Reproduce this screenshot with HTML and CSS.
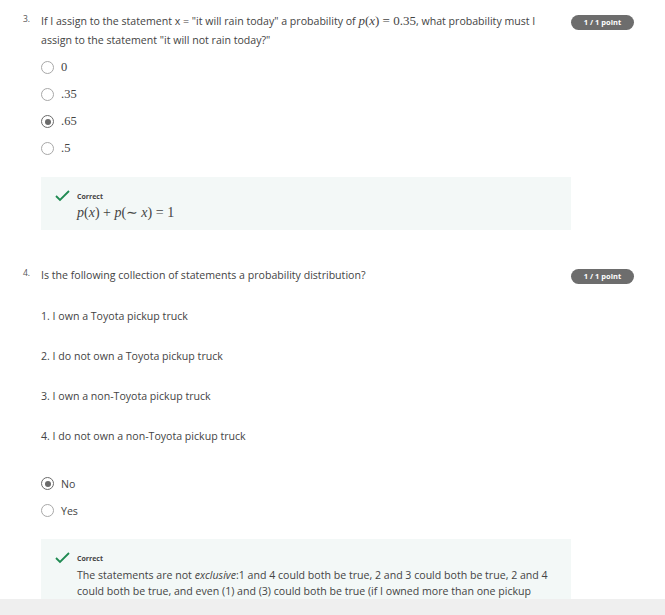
FILE: index.html
```html
<!DOCTYPE html>
<html>
<head>
<meta charset="utf-8">
<link rel="stylesheet" href="styles.css">
</head>
<body>
<div class="page">
  <section class="question q3">
    <div class="qnum">3.</div>
    <div class="qbody">
      <div class="qhead">
        <p class="qtext">If I assign to the statement x = "it will rain today" a probability of <span class="math"><i>p</i>(<i>x</i>) = 0.35</span>, what probability must I assign to the statement "it will not rain today?"</p>
        <span class="badge">1 / 1 point</span>
      </div>
      <ul class="options serif-opts">
        <li class="opt"><span class="radio"></span><span class="label">0</span></li>
        <li class="opt"><span class="radio"></span><span class="label">.35</span></li>
        <li class="opt"><span class="radio checked"></span><span class="label">.65</span></li>
        <li class="opt"><span class="radio"></span><span class="label">.5</span></li>
      </ul>
      <div class="feedback fb1">
        <svg class="check" width="15" height="12" viewBox="0 0 15 12"><polyline points="1,6 5,10 14,1" fill="none" stroke="#1f8a52" stroke-width="1.8"/></svg>
        <div class="fbcontent">
          <div class="fbtitle">Correct</div>
          <div class="formula"><i>p</i>(<i>x</i>) + <i>p</i>(∼ <i>x</i>) = 1</div>
        </div>
      </div>
    </div>
  </section>

  <section class="question q4">
    <div class="qnum">4.</div>
    <div class="qbody">
      <div class="qhead">
        <p class="qtext">Is the following collection of statements a probability distribution?</p>
        <span class="badge">1 / 1 point</span>
      </div>
      <ol class="statements">
        <li>1. I own a Toyota pickup truck</li>
        <li>2. I do not own a Toyota pickup truck</li>
        <li>3. I own a non-Toyota pickup truck</li>
        <li>4. I do not own a non-Toyota pickup truck</li>
      </ol>
      <ul class="options sans-opts">
        <li class="opt"><span class="radio checked"></span><span class="label">No</span></li>
        <li class="opt"><span class="radio"></span><span class="label">Yes</span></li>
      </ul>
      <div class="feedback fb2">
        <svg class="check" width="15" height="12" viewBox="0 0 15 12"><polyline points="1,6 5,10 14,1" fill="none" stroke="#1f8a52" stroke-width="1.8"/></svg>
        <div class="fbcontent">
          <div class="fbtitle">Correct</div>
          <p class="fbtext">The statements are not <em>exclusive</em>:1 and 4 could both be true, 2 and 3 could both be true, 2 and 4 could both be true, and even (1) and (3) could both be true (if I owned more than one pickup truck).</p>
        </div>
      </div>
    </div>
  </section>
</div>
<div class="bottombar"></div>
</body>
</html>
```

FILE: styles.css
```css
html, body {
  margin: 0;
  padding: 0;
  background: #ffffff;
  overflow: hidden;
}
body {
  font-family: "Open Sans", "DejaVu Sans", sans-serif;
  color: #373a3c;
  width: 665px;
  height: 615px;
}
.page {
  padding: 13px 31px 0 23px;
}
.question {
  display: flex;
}
.qnum {
  width: 18px;
  flex: none;
  font-size: 8.5px;
  line-height: 12px;
  color: #555;
}
.qbody {
  flex: 1;
}
.qhead {
  display: flex;
  align-items: flex-start;
  justify-content: space-between;
}
.qtext {
  margin: 0;
  font-size: 10.6px;
  line-height: 19px;
  width: 510px;
  margin-top: -1px;
  color: #444;
}
.math {
  font-family: "Liberation Serif", "DejaVu Serif", serif;
  font-size: 13px;
  line-height: 12px;
}
.badge {
  flex: none;
  width: 63px;
  height: 15px;
  border-radius: 8px;
  background: #6d6d6d;
  color: #fff;
  font-size: 7.5px;
  font-weight: 700;
  line-height: 15px;
  text-align: center;
  margin-top: 2px;
}
.options {
  list-style: none;
  margin: 4px 0 0 0;
  padding: 0;
}
.opt {
  display: flex;
  align-items: center;
  height: 27px;
}
.radio {
  width: 11px;
  height: 11px;
  border: 1px solid #a8a8a8;
  border-radius: 50%;
  box-sizing: content-box;
  display: flex;
  align-items: center;
  justify-content: center;
  flex: none;
}
.radio.checked {
  border-color: #6a6a6a;
}
.radio.checked::after {
  content: "";
  width: 6px;
  height: 6px;
  border-radius: 50%;
  background: #6a6a6a;
}
.label {
  margin-left: 7px;
}
.serif-opts .label {
  font-family: "Liberation Serif", "DejaVu Serif", serif;
  font-size: 12.5px;
  color: #444;
}
.sans-opts .label {
  font-size: 10.6px;
  color: #444;
}
.feedback {
  background: #f3f8f7;
  display: flex;
  align-items: flex-start;
  padding: 12px 0 0 14px;
  width: 516px;
  box-sizing: content-box;
}
.fb1 {
  margin-top: 15px;
  height: 41px;
}
.check {
  flex: none;
  margin-top: 1px;
}
.fbcontent {
  margin-left: 7px;
}
.fbtitle {
  font-size: 7px;
  font-weight: 700;
  color: #444;
  line-height: 10px;
  margin-top: 3px;
}
.formula {
  font-family: "Liberation Serif", "DejaVu Serif", serif;
  font-size: 14px;
  color: #444;
  line-height: 16px;
  margin-top: 3px;
}
.q4 {
  margin-top: 37px;
}
.statements {
  list-style: none;
  margin: 21px 0 0 0;
  padding: 0;
}
.statements li {
  font-size: 10.6px;
  line-height: 20px;
  height: 40px;
  color: #444;
}
.sans-opts {
  margin-top: 4px;
}
.fb2 {
  margin-top: 15px;
  height: 80px;
}
.fbtext {
  margin: 3px 0 0 0;
  font-size: 10.6px;
  line-height: 16px;
  color: #444;
  width: 485px;
}
.bottombar {
  position: fixed;
  left: 0;
  right: 0;
  bottom: 0;
  height: 16px;
  background: #efefef;
}
```
